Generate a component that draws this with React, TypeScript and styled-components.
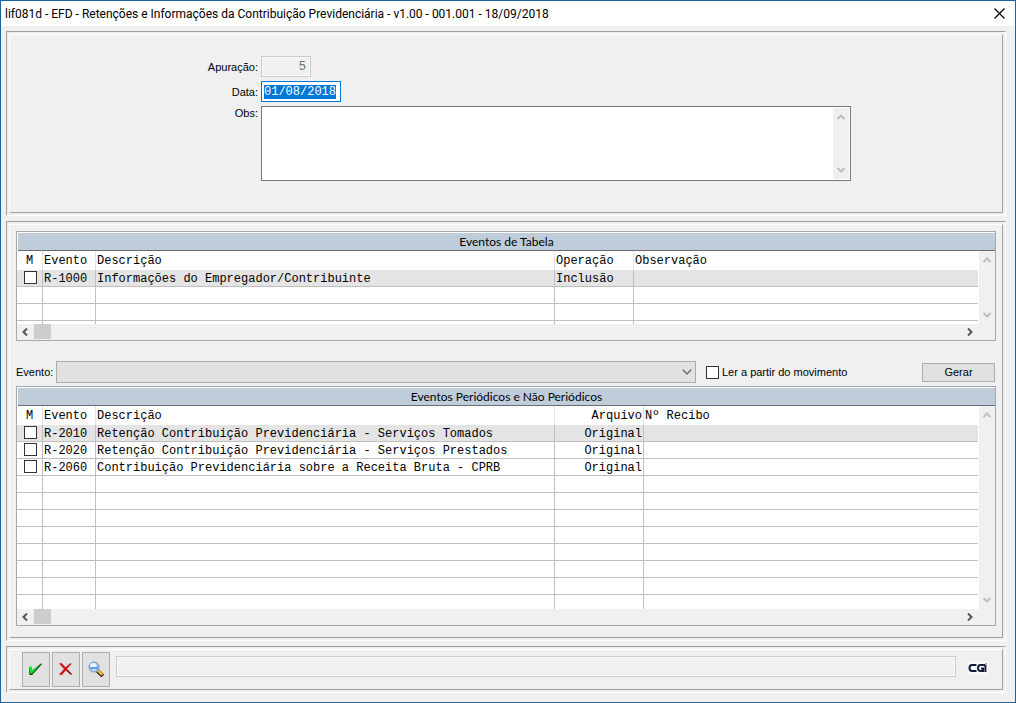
import React, { useEffect, useRef } from "react";
import styled, { createGlobalStyle } from "styled-components";

const GlobalStyle = createGlobalStyle`
  * { box-sizing: border-box; }
  body {
    margin: 0;
    background: #f0f0f0;
    color: #000;
    font-family: "Liberation Sans", Arial, sans-serif;
    font-size: 11px;
    line-height: 14px;
  }
  button, input, select, textarea { font: inherit; color: inherit; margin: 0; border-radius: 0; }
`;

const MONO = `"Liberation Mono", "Courier New", monospace`;
const UI = `Lato, "Segoe UI", sans-serif`;

const Window = styled.div`
  display: flex;
  flex-direction: column;
  min-height: 100vh;
  border: 1px solid #1d639a;
`;

const TitleBar = styled.header`
  display: flex;
  align-items: center;
  justify-content: space-between;
  height: 25px;
  padding: 0 8px 0 4px;
  background: #fff;
`;

const Title = styled.h1`
  margin: 0;
  font-family: Roboto, "Segoe UI", sans-serif;
  font-size: 12px;
  font-weight: 400;
  line-height: 16px;
  white-space: nowrap;
`;

const CloseButton = styled.button`
  display: flex;
  padding: 2px;
  border: 0;
  background: none;
`;

const Body = styled.main`
  display: flex;
  flex: 1;
  flex-direction: column;
  gap: 5px;
  padding: 5px 9px 9px 5px;
`;

const PanelFrame = styled.section<{ $grow?: boolean }>`
  display: flex;
  flex: ${(p) => (p.$grow ? "1 0 auto" : "none")};
  padding: 2px;
  border: 1px solid;
  border-color: #a0a0a0 #fff #fff #a0a0a0;
`;

const PanelInner = styled.div<{ $pad: string }>`
  display: flex;
  flex: 1;
  flex-direction: column;
  min-width: 0;
  padding: ${(p) => p.$pad};
  border: 1px solid;
  border-color: #fff #a0a0a0 #a0a0a0 #fff;
`;

function Panel(props: { pad: string; grow?: boolean; children: React.ReactNode }) {
  return (
    <PanelFrame $grow={props.grow}>
      <PanelInner $pad={props.pad}>{props.children}</PanelInner>
    </PanelFrame>
  );
}

const Form = styled.form`
  display: grid;
  grid-template-columns: 248px minmax(0, 590px);
  column-gap: 3px;
  row-gap: 4px;
`;

const FieldLabel = styled.label`
  padding-top: 4px;
  text-align: right;
`;

const MemoLabel = styled(FieldLabel)`
  padding-top: 0;
`;

const TextInput = styled.input<{ $width: number }>`
  width: ${(p) => p.$width}px;
  height: 21px;
  padding: 0 2px;
  border: 1px solid #0078d7;
  outline: 0;
  background: #fff;
  font-family: ${MONO};
  font-size: 12px;

  &::selection { background: #0078d7; color: #fff; }
  &:disabled {
    padding: 0 4px;
    border-color: #ccc;
    background: #f0f0f0;
    box-shadow: inset 0 0 0 1px #f8f8f8;
    color: #6d6d6d;
    text-align: right;
  }
`;

const Memo = styled.div`
  display: flex;
  height: 75px;
  padding: 1px;
  border: 1px solid #7a7a7a;
  background: #fff;
`;

const MemoText = styled.textarea`
  flex: 1;
  min-width: 0;
  padding: 2px;
  border: 0;
  outline: 0;
  resize: none;
  background: transparent;
  font-family: ${MONO};
  font-size: 12px;
`;

const VScroll = styled.div`
  display: flex;
  flex: none;
  flex-direction: column;
  justify-content: space-between;
  width: 16px;
  padding: 1px 0;
  background: #f0f0f0;
`;

const HScroll = styled.div`
  display: flex;
  flex: none;
  align-items: stretch;
  height: 16px;
  padding-right: 17px;
  background: #f0f0f0;
`;

const ScrollButton = styled.button`
  display: flex;
  align-items: center;
  justify-content: center;
  width: 16px;
  height: 16px;
  padding: 0;
  border: 0;
  background: none;
`;

const Thumb = styled.div`
  width: 17px;
  height: 15px;
  margin-right: auto;
  margin-left: 1px;
  background: #cdcdcd;
`;

const arrows = {
  up: "M0.5 6 L4 2.5 L7.5 6",
  down: "M0.5 2 L4 5.5 L7.5 2",
  left: "M6 0.5 L2.5 4 L6 7.5",
  right: "M2 0.5 L5.5 4 L2 7.5",
};

function Arrow({ dir, color }: { dir: keyof typeof arrows; color: string }) {
  return (
    <svg width="8" height="8" viewBox="0 0 8 8" aria-hidden="true">
      <path d={arrows[dir]} fill="none" stroke={color} strokeWidth="2" />
    </svg>
  );
}

function VerticalScrollbar() {
  return (
    <VScroll>
      <ScrollButton type="button" aria-label="Rolar para cima">
        <Arrow dir="up" color="#bfbfbf" />
      </ScrollButton>
      <ScrollButton type="button" aria-label="Rolar para baixo">
        <Arrow dir="down" color="#bfbfbf" />
      </ScrollButton>
    </VScroll>
  );
}

const GridBox = styled.div<{ $grow?: boolean }>`
  display: flex;
  flex: ${(p) => (p.$grow ? "1 0 auto" : "none")};
  flex-direction: column;
  border: 1px solid #a5a8ad;
  background: #fff;
`;

const GridTitle = styled.h2`
  height: 18px;
  margin: 1px 0 0 1px;
  border-bottom: 1px solid #696d73;
  background: #bfcddb;
  font-family: ${UI};
  font-size: 12px;
  font-weight: 400;
  line-height: 17px;
  text-align: center;
`;

const GridMain = styled.div<{ $height: number }>`
  display: flex;
  flex: 1 0 ${(p) => p.$height}px;
`;

const GridViewport = styled.div<{ $height: number }>`
  flex: 1;
  min-width: 0;
  height: ${(p) => p.$height}px;
  padding-right: 1px;
  overflow: hidden;
`;

const Table = styled.table`
  width: 100%;
  border-collapse: separate;
  border-spacing: 0;
  table-layout: fixed;
  font-family: ${MONO};
  font-size: 12px;
  line-height: 14px;
`;

const HeadCell = styled.th<{ $right?: boolean; $center?: boolean }>`
  height: 19px;
  padding: 0 1px;
  border-right: 1px solid #e3e3e3;
  font-weight: 400;
  text-align: ${(p) => (p.$right ? "right" : p.$center ? "center" : "left")};
  white-space: nowrap;

  &:last-child { border-right: 0; }
`;

const Row = styled.tr<{ $active?: boolean }>`
  background: ${(p) => (p.$active ? "#e4e4e4" : "#fff")};
`;

const Cell = styled.td<{ $right?: boolean }>`
  height: 17px;
  padding: 2px 1px 0;
  border-right: 1px solid #bfbfbf;
  border-bottom: 1px solid #bfbfbf;
  text-align: ${(p) => (p.$right ? "right" : "left")};
  vertical-align: top;
  white-space: nowrap;

  &:last-child { border-right: 0; }
`;

const CheckCell = styled(Cell)`
  padding: 1px 0 0 7px;
`;

const CheckBox = styled.input.attrs({ type: "checkbox" })`
  display: block;
  flex: none;
  width: 13px;
  height: 13px;
  appearance: none;
  border: 1px solid #333;
  background: #fff;
`;

type Column = { name: string; width?: number; right?: boolean };

function DataGrid(props: {
  title: string;
  columns: Column[];
  rows: string[][];
  blanks: number;
  height: number;
  grow?: boolean;
}) {
  const { title, columns, rows, blanks, height, grow } = props;
  return (
    <GridBox $grow={grow}>
      <GridTitle>{title}</GridTitle>
      <GridMain $height={height}>
        <GridViewport $height={height}>
          <Table aria-label={title}>
            <colgroup>
              <col width={26} />
              {columns.map((c) => (
                <col key={c.name} width={c.width} />
              ))}
            </colgroup>
            <thead>
              <tr>
                <HeadCell $center>M</HeadCell>
                {columns.map((c) => (
                  <HeadCell key={c.name} $right={c.right}>{c.name}</HeadCell>
                ))}
              </tr>
            </thead>
            <tbody>
              {rows.map((row, i) => (
                <Row key={row[0]} $active={i === 0}>
                  <CheckCell><CheckBox aria-label={`Marcar ${row[0]}`} /></CheckCell>
                  {columns.map((c, j) => (
                    <Cell key={c.name} $right={c.right}>{row[j]}</Cell>
                  ))}
                </Row>
              ))}
              {Array.from({ length: blanks }, (_, i) => (
                <Row key={i}>
                  <Cell />
                  {columns.map((c) => <Cell key={c.name} />)}
                </Row>
              ))}
            </tbody>
          </Table>
        </GridViewport>
        <VerticalScrollbar />
      </GridMain>
      <HScroll>
        <ScrollButton type="button" aria-label="Rolar para a esquerda">
          <Arrow dir="left" color="#555" />
        </ScrollButton>
        <Thumb />
        <ScrollButton type="button" aria-label="Rolar para a direita">
          <Arrow dir="right" color="#555" />
        </ScrollButton>
      </HScroll>
    </GridBox>
  );
}

const FilterBar = styled.div`
  display: flex;
  align-items: center;
  height: 22px;
  margin: 20px 0 3px;
`;

const ComboLabel = styled.label`
  flex: none;
  width: 40px;
`;

const ComboWrap = styled.div`
  display: grid;
  flex: 1;
  align-items: center;
  max-width: 640px;
  margin-right: 10px;

  > * { grid-area: 1 / 1; }
  > svg { justify-self: end; margin-right: 4px; pointer-events: none; }
`;

const Combo = styled.select`
  width: 100%;
  height: 22px;
  appearance: none;
  border: 1px solid #adadad;
  background: #e1e1e1;
`;

const CheckLabel = styled.label`
  display: flex;
  align-items: center;
  gap: 3px;
  white-space: nowrap;
`;

const ActionButton = styled.button`
  width: 73px;
  height: 19px;
  margin: 0 1px 0 auto;
  padding: 0;
  border: 1px solid #adadad;
  background: #e1e1e1;
`;

const Toolbar = styled.footer`
  display: flex;
  gap: 2px;
`;

const ToolButton = styled.button`
  display: flex;
  align-items: center;
  justify-content: center;
  width: 28px;
  height: 35px;
  padding: 0 0 2px;
  border: 1px solid #adadad;
  background: #e1e1e1;
`;

const Status = styled.div`
  flex: 1;
  height: 21px;
  margin: 4px 10px 0 4px;
  border: 1px solid #ccc;
  box-shadow: inset 0 0 0 1px #f8f8f8;
`;

const Logo = styled.svg`
  margin: 9px 14px 0 0;
`;

const tableEvents: Column[] = [
  { name: "Evento", width: 53 },
  { name: "Descrição", width: 459 },
  { name: "Operação", width: 79 },
  { name: "Observação" },
];

const periodicEvents: Column[] = [
  { name: "Evento", width: 53 },
  { name: "Descrição", width: 459 },
  { name: "Arquivo", width: 89, right: true },
  { name: "Nº Recibo" },
];

export default function App() {
  const dateRef = useRef<HTMLInputElement>(null);

  useEffect(() => {
    dateRef.current?.focus();
    dateRef.current?.select();
  }, []);

  return (
    <>
      <GlobalStyle />
      <Window>
        <TitleBar>
          <Title>lif081d - EFD - Retenções e Informações da Contribuição Previdenciária - v1.00 - 001.001 - 18/09/2018</Title>
          <CloseButton type="button" aria-label="Fechar">
            <svg width="11" height="11" viewBox="0 0 11 11" aria-hidden="true">
              <path d="M0.5 0.5 L10.5 10.5 M10.5 0.5 L0.5 10.5" stroke="#000" strokeWidth="1.2" />
            </svg>
          </CloseButton>
        </TitleBar>
        <Body>
          <Panel pad="21px 0 31px">
            <Form>
              <FieldLabel htmlFor="apuracao">Apuração:</FieldLabel>
              <TextInput id="apuracao" $width={50} defaultValue="5" disabled />
              <FieldLabel htmlFor="data">Data:</FieldLabel>
              <TextInput id="data" ref={dateRef} $width={80} defaultValue="01/08/2018" />
              <MemoLabel htmlFor="obs">Obs:</MemoLabel>
              <Memo>
                <MemoText id="obs" />
                <VerticalScrollbar />
              </Memo>
            </Form>
          </Panel>

          <Panel pad="6px 6px 11px" grow>
            <DataGrid
              title="Eventos de Tabela"
              columns={tableEvents}
              rows={[["R-1000", "Informações do Empregador/Contribuinte", "Inclusão", ""]]}
              blanks={3}
              height={73}
            />
            <FilterBar>
              <ComboLabel htmlFor="evento">Evento:</ComboLabel>
              <ComboWrap>
                <Combo id="evento" defaultValue="">
                  <option value="" />
                </Combo>
                <svg width="10" height="6" viewBox="0 0 10 6" aria-hidden="true">
                  <path d="M0.7 0.7 L5 5 L9.3 0.7" fill="none" stroke="#555" strokeWidth="1.2" />
                </svg>
              </ComboWrap>
              <CheckLabel>
                <CheckBox />
                Ler a partir do movimento
              </CheckLabel>
              <ActionButton type="button">Gerar</ActionButton>
            </FilterBar>
            <DataGrid
              title="Eventos Periódicos e Não Periódicos"
              columns={periodicEvents}
              rows={[
                ["R-2010", "Retenção Contribuição Previdenciária - Serviços Tomados", "Original", ""],
                ["R-2020", "Retenção Contribuição Previdenciária - Serviços Prestados", "Original", ""],
                ["R-2060", "Contribuição Previdenciária sobre a Receita Bruta - CPRB", "Original", ""],
              ]}
              blanks={8}
              height={203}
              grow
            />
          </Panel>

          <Panel pad="2px 0 2px 12px">
            <Toolbar>
              <ToolButton type="button" aria-label="Confirmar">
                <svg width="16" height="16" viewBox="0 0 16 16" aria-hidden="true">
                  <path d="M1 7 L3 6.5 L4.5 9.5 L13 2.5 L14 3 L5 13 L4 14 L1.5 14 Z" fill="#063b06" />
                  <path d="M1 6 L3.2 5 L4.6 9 L13.5 2 L4.2 12.6 L2 12.6 Z" fill="#10e02a" />
                </svg>
              </ToolButton>
              <ToolButton type="button" aria-label="Cancelar">
                <svg width="16" height="16" viewBox="0 0 16 16" aria-hidden="true">
                  <path d="M1 2.5 L3.5 2 L7.5 6.3 L12.5 2 L13.5 3 L9 7.8 L14 13 L13 14 L7.7 9.5 L4 14 L1 13.5 L6 8 Z" fill="#cc1616" />
                  <path d="M9.2 9.6 L13.2 13.4" stroke="#7a0a0a" strokeWidth="1" />
                </svg>
              </ToolButton>
              <ToolButton type="button" aria-label="Pesquisar">
                <svg width="16" height="16" viewBox="0 0 16 16" aria-hidden="true">
                  <path d="M9.5 9.8 L14.8 15" stroke="#2a2112" strokeWidth="4" />
                  <path d="M9.5 9 L14.3 13.8" stroke="#efb944" strokeWidth="2.6" />
                  <circle cx="6" cy="6" r="5" fill="#8fc1f0" stroke="#7c93b4" strokeWidth="1" />
                  <ellipse cx="5.4" cy="4.2" rx="3.2" ry="2.2" fill="#eaf6ff" />
                  <path d="M2.5 7 H9.5" stroke="#4a90de" strokeWidth="1.4" />
                  <path d="M4 9 H8" stroke="#cfe8fb" strokeWidth="1.2" />
                </svg>
              </ToolButton>
              <Status role="status" />
              <Logo width="20" height="14" viewBox="0 0 20 14" role="img" aria-label="CGI">
                <rect width="20" height="14" fill="#f8f8f8" />
                <path d="M8.5 4 H4 Q1.5 4 1.5 7 Q1.5 10 4 10 H8.5" fill="none" stroke="#141c3c" strokeWidth="2" />
                <path d="M17 4 H12.5 Q10 4 10 7 Q10 10 12.5 10 H15 V7.5 H13 M17.4 4 V11" fill="none" stroke="#141c3c" strokeWidth="2" />
                <rect x="17" y="2" width="2" height="2" fill="#e8a468" />
              </Logo>
            </Toolbar>
          </Panel>
        </Body>
      </Window>
    </>
  );
}
